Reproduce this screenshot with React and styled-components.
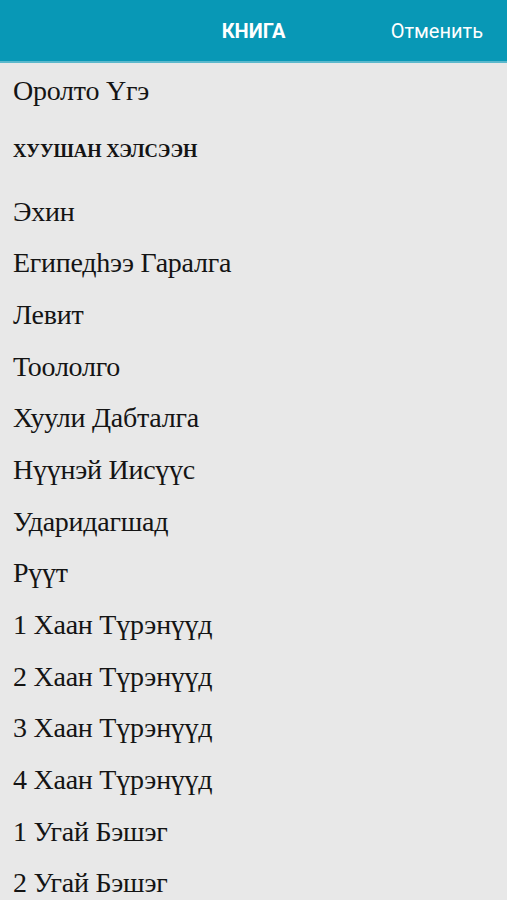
import React from 'react'
import styled, { createGlobalStyle } from 'styled-components'

const GlobalStyle = createGlobalStyle`
  html, body {
    margin: 0;
    padding: 0;
    background: #e8e8e8;
  }
`

const Page = styled.div`
  width: 507px;
  height: 900px;
  overflow: hidden;
  background: #e8e8e8;
  font-family: "Liberation Serif", "DejaVu Serif", serif;
`

const Header = styled.div`
  height: 61px;
  background: #0898b6;
  border-bottom: 2px solid #5bb8cc;
  display: grid;
  grid-template-columns: 1fr auto 1fr;
  align-items: center;
  color: #fff;
  font-family: Roboto, "Liberation Sans", sans-serif;
  font-size: 20px;
`

const Title = styled.div`
  grid-column: 2;
  font-weight: 700;
`

const Cancel = styled.div`
  grid-column: 3;
  justify-self: end;
  padding-right: 24px;
  margin-top: 1px;
`

const List = styled.div`
  display: flex;
  flex-direction: column;
  padding-top: 2px;
`

const Row = styled.div`
  height: 51.7px;
  flex-shrink: 0;
  display: flex;
  align-items: center;
  padding-left: 13px;
  color: #141414;
  font-size: ${p => (p.$section ? '18.5px' : '28px')};
  letter-spacing: ${p => (p.$section ? '0' : '-0.25px')};
  font-weight: ${p => (p.$section ? 700 : 400)};
  ${p => p.$section && 'height: 69px;'}
`

const books = [
  'Эхин',
  'Египедһээ Гаралга',
  'Левит',
  'Тоололго',
  'Хуули Дабталга',
  'Нүүнэй Иисүүс',
  'Ударидагшад',
  'Рүүт',
  '1 Хаан Түрэнүүд',
  '2 Хаан Түрэнүүд',
  '3 Хаан Түрэнүүд',
  '4 Хаан Түрэнүүд',
  '1 Угай Бэшэг',
  '2 Угай Бэшэг',
]

export default function App() {
  return (
    <Page>
      <GlobalStyle />
      <Header>
        <Title>КНИГА</Title>
        <Cancel>Отменить</Cancel>
      </Header>
      <List>
        <Row>Оролто Үгэ</Row>
        <Row $section>ХУУШАН ХЭЛСЭЭН</Row>
        {books.map(b => (
          <Row key={b}>{b}</Row>
        ))}
      </List>
    </Page>
  )
}
